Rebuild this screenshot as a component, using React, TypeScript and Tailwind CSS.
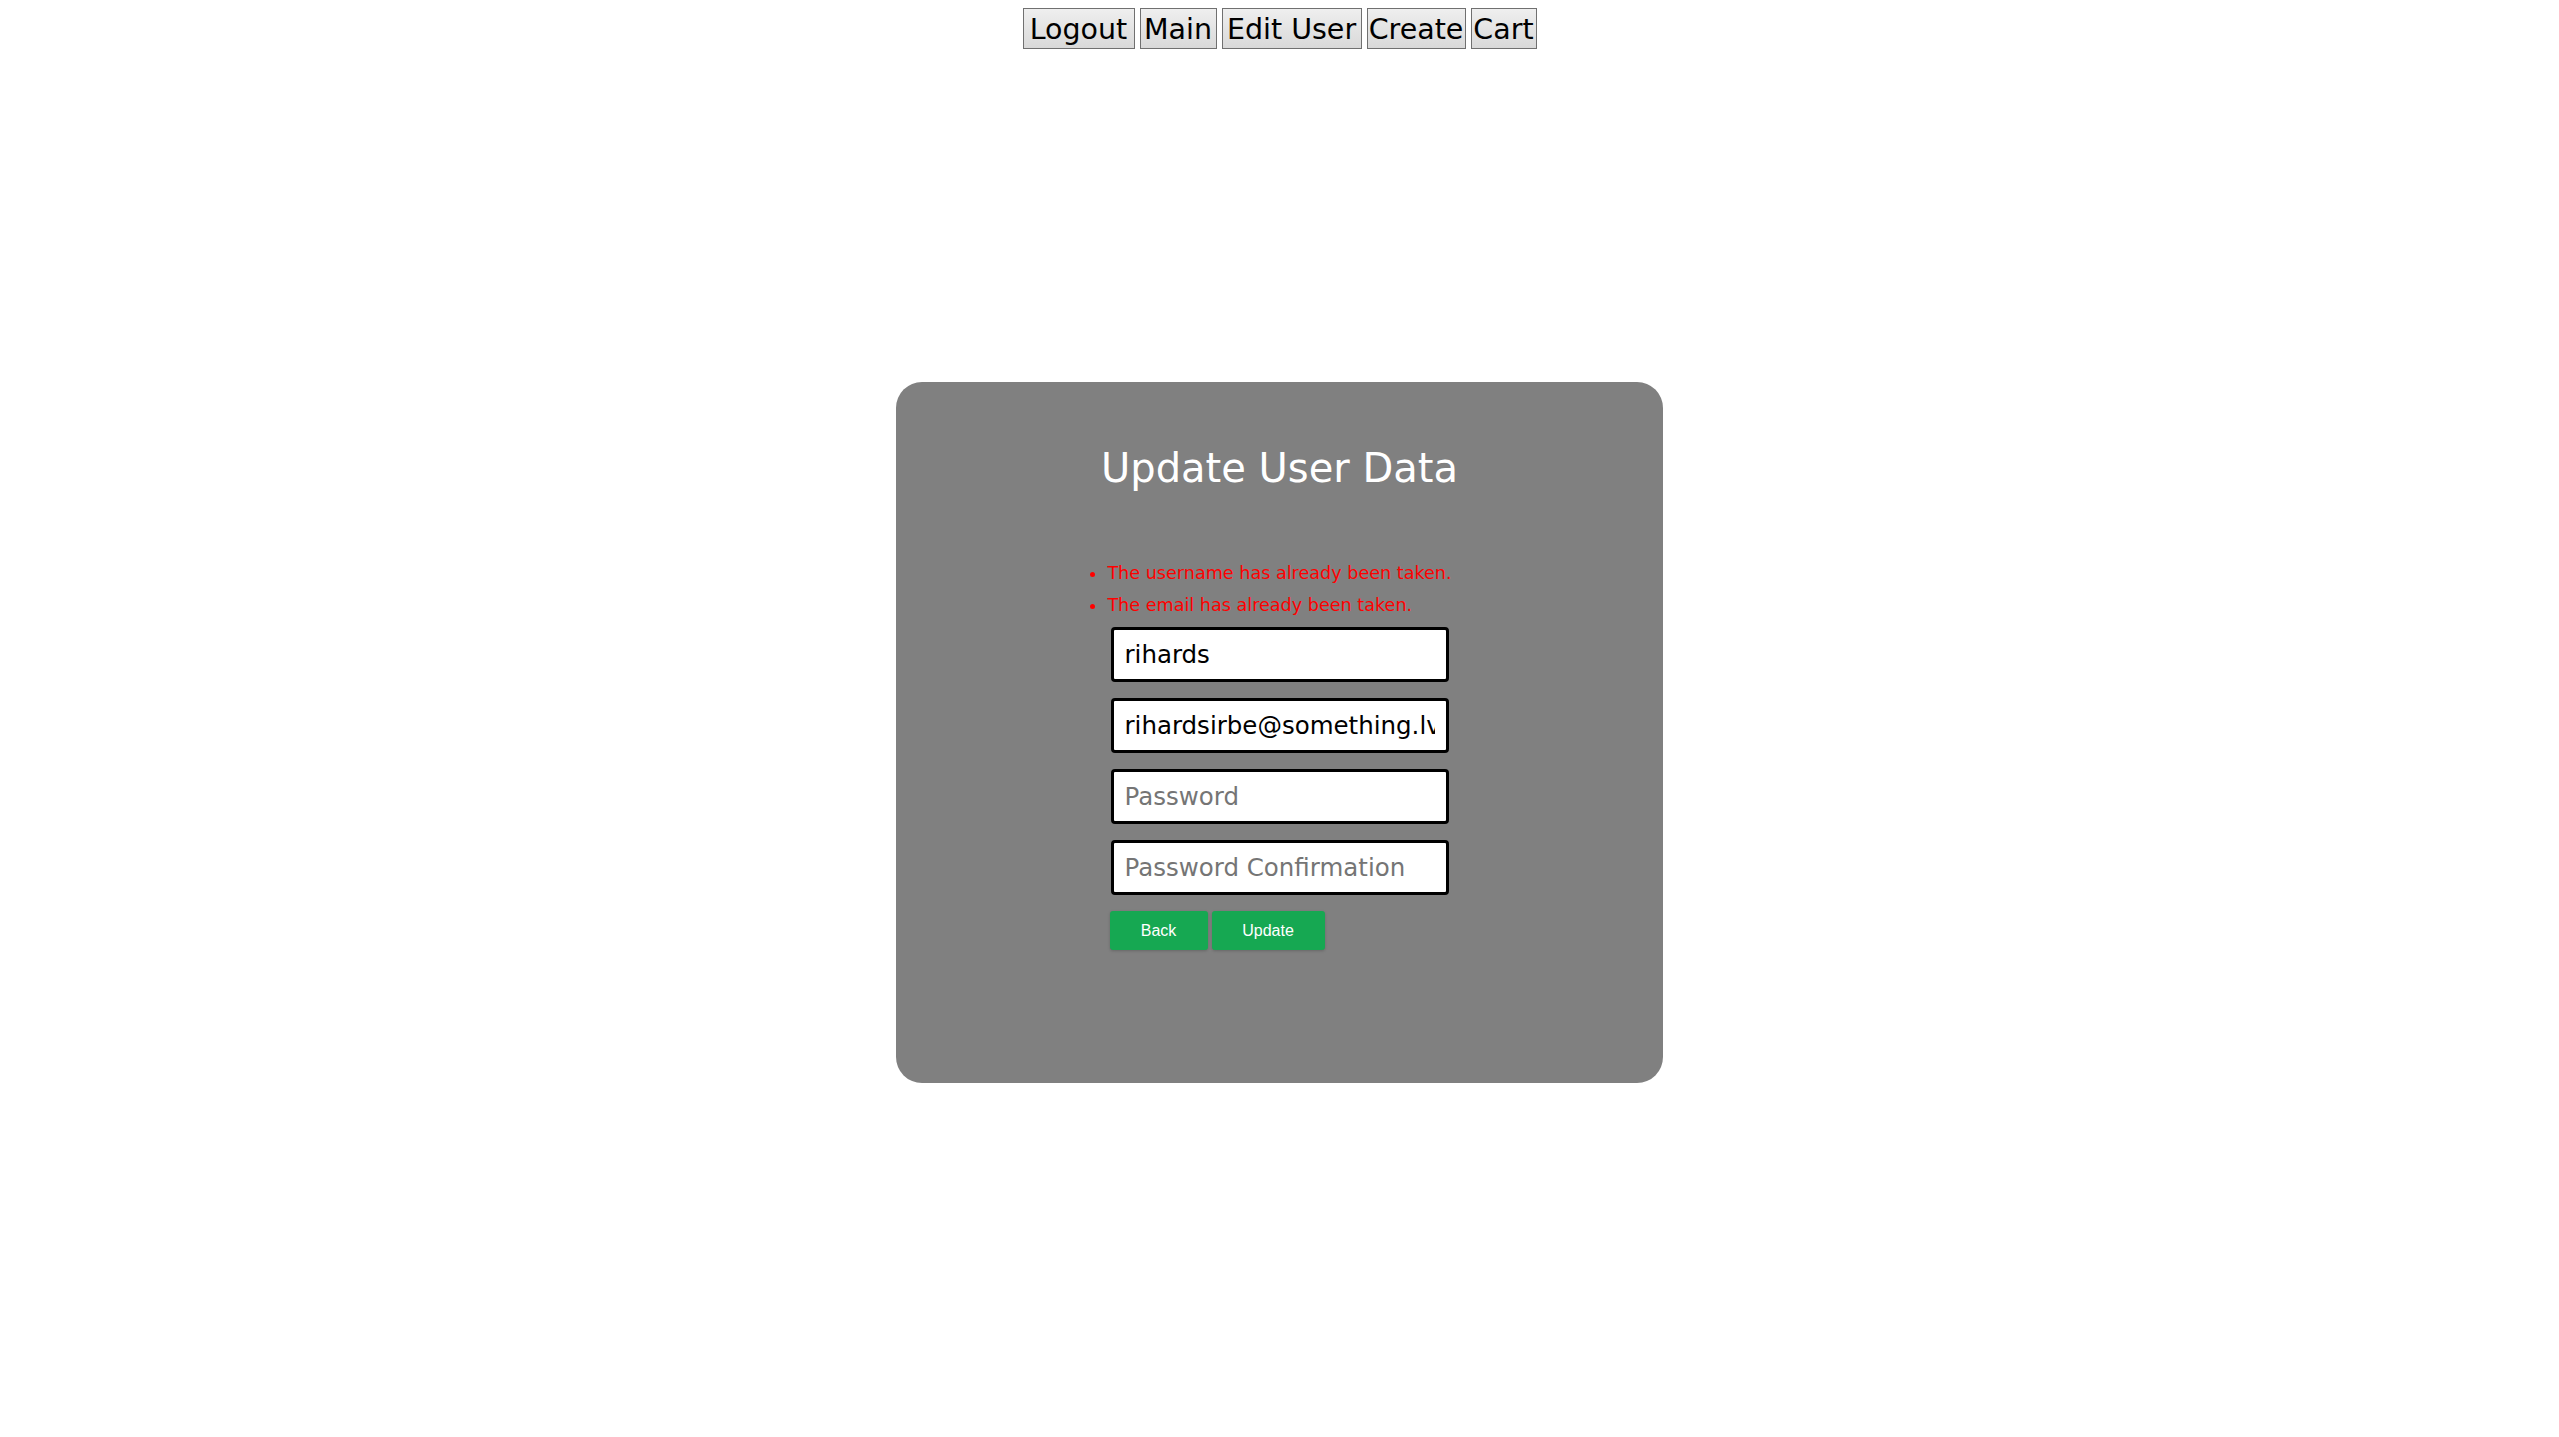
import { useState } from 'react';

const navItems = [
  { label: 'Logout', width: 'w-[112px]' },
  { label: 'Main', width: 'w-[77px]' },
  { label: 'Edit User', width: 'w-[140px]' },
  { label: 'Create', width: 'w-[99px]' },
  { label: 'Cart', width: 'w-[66px]' },
];

const errors = ['The username has already been taken.', 'The email has already been taken.'];

export default function App() {
  const [username, setUsername] = useState('rihards');
  const [email, setEmail] = useState('rihardsirbe@something.lv');
  const [password, setPassword] = useState('');
  const [confirm, setConfirm] = useState('');

  const inputClass =
    "block w-[338px] h-[55px] px-[11px] border-[3px] border-black rounded-[4px] bg-white text-black text-[24.5px] font-['DejaVu_Sans',sans-serif] outline-none placeholder:text-[#757575]";

  return (
    <div className="min-h-screen bg-white font-['DejaVu_Sans',sans-serif]">
      <nav className="flex justify-center gap-[5px] pt-2">
        {navItems.map((item) => (
          <button
            key={item.label}
            className={`${item.width} h-[41px] pt-[3px] flex items-center justify-center border border-[#707070] bg-gradient-to-b from-[#efefef] to-[#d9d9d9] text-black text-[28.5px] leading-none whitespace-nowrap`}
          >
            {item.label}
          </button>
        ))}
      </nav>

      <div className="mx-auto mt-[333px] w-[767px] h-[701px] rounded-[26px] bg-[#808080] pt-[62px]">
        <h1 className="text-center text-white text-[40px] leading-[48px] font-normal">Update User Data</h1>

        <ul className="mx-auto mt-[65px] w-fit list-disc list-outside text-[#ff0000] text-[17.6px] leading-[32px]">
          {errors.map((err) => (
            <li key={err}>{err}</li>
          ))}
        </ul>

        <form className="mx-auto mt-[6px] w-[338px] flex flex-col gap-[16px]" onSubmit={(e) => e.preventDefault()}>
          <input type="text" value={username} onChange={(e) => setUsername(e.target.value)} className={inputClass} />
          <input type="text" value={email} onChange={(e) => setEmail(e.target.value)} className={inputClass} />
          <input
            type="password"
            placeholder="Password"
            value={password}
            onChange={(e) => setPassword(e.target.value)}
            className={inputClass}
          />
          <input
            type="password"
            placeholder="Password Confirmation"
            value={confirm}
            onChange={(e) => setConfirm(e.target.value)}
            className={inputClass}
          />
          <div className="flex gap-[4px] -ml-px">
            <button
              type="button"
              className="w-[98px] h-[39px] rounded-[3px] bg-[#16a852] text-white text-[16px] font-['Liberation_Sans',Arial,sans-serif] shadow-[0_1px_3px_rgba(0,0,0,0.2)]"
            >
              Back
            </button>
            <button
              type="submit"
              className="w-[113px] h-[39px] rounded-[3px] bg-[#16a852] text-white text-[16px] font-['Liberation_Sans',Arial,sans-serif] shadow-[0_1px_3px_rgba(0,0,0,0.2)]"
            >
              Update
            </button>
          </div>
        </form>
      </div>
    </div>
  );
}
